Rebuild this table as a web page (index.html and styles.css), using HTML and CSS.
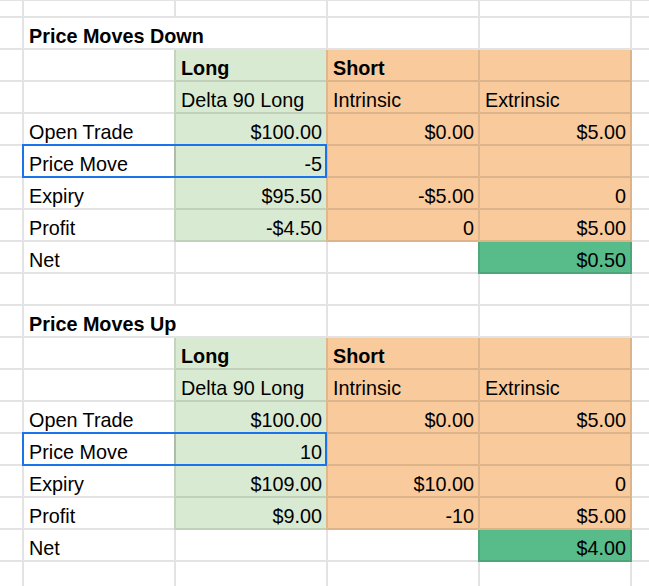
FILE: index.html
```html
<!DOCTYPE html>
<html>
<head>
<meta charset="utf-8">
<link rel="stylesheet" href="styles.css">
</head>
<body>
<div class="sheet">
  <div class="c"></div><div class="c"></div><div class="c"></div><div class="c"></div><div class="c"></div><div class="c"></div>

  <div class="c"></div><div class="c span2 b">Price Moves Down</div><div class="c"></div><div class="c"></div><div class="c"></div>
  <div class="c"></div><div class="c"></div><div class="c g b">Long</div><div class="c o b">Short</div><div class="c o"></div><div class="c"></div>
  <div class="c"></div><div class="c"></div><div class="c g">Delta 90 Long</div><div class="c o">Intrinsic</div><div class="c o">Extrinsic</div><div class="c"></div>
  <div class="c"></div><div class="c">Open Trade</div><div class="c g r">$100.00</div><div class="c o r">$0.00</div><div class="c o r">$5.00</div><div class="c"></div>
  <div class="c"></div><div class="c rel">Price Move<span class="sel"></span></div><div class="c g r">-5</div><div class="c o"></div><div class="c o"></div><div class="c"></div>
  <div class="c"></div><div class="c">Expiry</div><div class="c g r">$95.50</div><div class="c o r">-$5.00</div><div class="c o r">0</div><div class="c"></div>
  <div class="c"></div><div class="c">Profit</div><div class="c g r">-$4.50</div><div class="c o r">0</div><div class="c o r">$5.00</div><div class="c"></div>
  <div class="c"></div><div class="c">Net</div><div class="c"></div><div class="c"></div><div class="c n r">$0.50</div><div class="c"></div>
  <div class="c"></div><div class="c"></div><div class="c"></div><div class="c"></div><div class="c"></div><div class="c"></div>

  <div class="c"></div><div class="c span2 b">Price Moves Up</div><div class="c"></div><div class="c"></div><div class="c"></div>
  <div class="c"></div><div class="c"></div><div class="c g b">Long</div><div class="c o b">Short</div><div class="c o"></div><div class="c"></div>
  <div class="c"></div><div class="c"></div><div class="c g">Delta 90 Long</div><div class="c o">Intrinsic</div><div class="c o">Extrinsic</div><div class="c"></div>
  <div class="c"></div><div class="c">Open Trade</div><div class="c g r">$100.00</div><div class="c o r">$0.00</div><div class="c o r">$5.00</div><div class="c"></div>
  <div class="c"></div><div class="c rel">Price Move<span class="sel"></span></div><div class="c g r">10</div><div class="c o"></div><div class="c o"></div><div class="c"></div>
  <div class="c"></div><div class="c">Expiry</div><div class="c g r">$109.00</div><div class="c o r">$10.00</div><div class="c o r">0</div><div class="c"></div>
  <div class="c"></div><div class="c">Profit</div><div class="c g r">$9.00</div><div class="c o r">-10</div><div class="c o r">$5.00</div><div class="c"></div>
  <div class="c"></div><div class="c">Net</div><div class="c"></div><div class="c"></div><div class="c n r">$4.00</div><div class="c"></div>
  <div class="c"></div><div class="c"></div><div class="c"></div><div class="c"></div><div class="c"></div><div class="c"></div>
</div>
</body>
</html>
```

FILE: styles.css
```css
html, body {
  margin: 0;
  padding: 0;
  background: #ffffff;
  overflow: hidden;
}

body {
  font-family: "Liberation Sans", Arial, Helvetica, sans-serif;
  font-size: 19.8px;
  color: #000000;
}

.sheet {
  display: grid;
  grid-template-columns: 24px 152px 152px 152px 152px 40px;
  grid-template-rows: 17px;
  grid-auto-rows: 32px;
  border-top: 1px solid #e3e3e3;
  width: 672px;
}

.c {
  box-sizing: border-box;
  border-right: 2px solid rgba(0, 0, 0, 0.11);
  border-bottom: 2px solid rgba(0, 0, 0, 0.11);
  display: flex;
  align-items: flex-end;
  padding: 0 4px 1px 5px;
  line-height: 22px;
  white-space: nowrap;
  overflow: visible;
}

.span2 {
  grid-column: span 2;
}

.b {
  font-weight: bold;
}

.r {
  justify-content: flex-end;
}

.g {
  background: #d9ead3;
  box-shadow: -2px 0 0 #c3d3be;
}

.o {
  background: #f9cb9c;
  box-shadow: -2px 0 0 #e0b78c;
}

.n {
  background: #57bb8a;
  box-shadow: -2px 0 0 #4ea87c;
}

.rel {
  position: relative;
}

.sel {
  position: absolute;
  left: -2px;
  top: -2px;
  width: 305px;
  height: 34px;
  box-sizing: border-box;
  border: 2px solid #1a73e8;
  z-index: 2;
}
```
